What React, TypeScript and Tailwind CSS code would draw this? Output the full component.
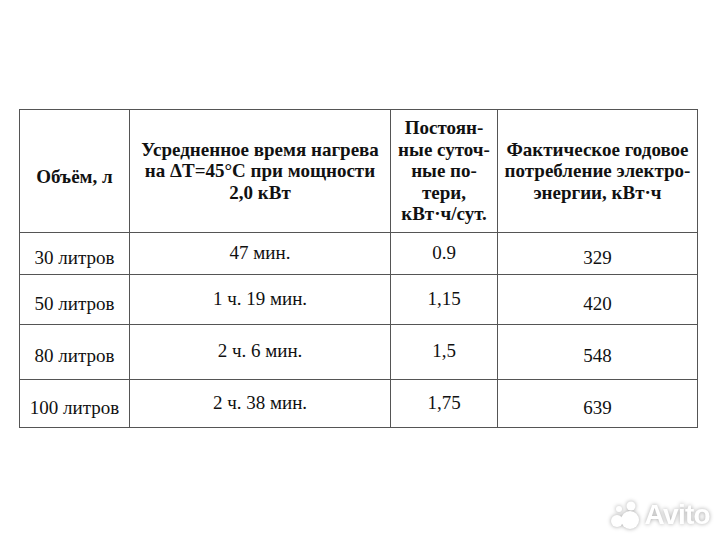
import React from 'react';

const rows = [
  { vol: '30 литров', time: '47 мин.', loss: '0.9', year: '329' },
  { vol: '50 литров', time: '1 ч. 19 мин.', loss: '1,15', year: '420' },
  { vol: '80 литров', time: '2 ч. 6 мин.', loss: '1,5', year: '548' },
  { vol: '100 литров', time: '2 ч. 38 мин.', loss: '1,75', year: '639' },
];

const cell =
  'flex items-center justify-center text-center border-r-[1.5px] border-b-[1.5px] border-[#555] font-[Liberation_Serif]';
const head = `${cell} text-[19px] font-bold leading-[21.5px]`;
const data = `${cell} text-[19px] leading-[22px]`;

function AvitoLogo() {
  return (
    <div className="flex items-center gap-[2px] drop-shadow-[0_0_2px_rgba(0,0,0,0.35)]">
      <svg width="34" height="30" viewBox="0 0 34 30">
        <circle cx="21" cy="20" r="9" fill="#fff" />
        <circle cx="8" cy="21" r="6" fill="#fff" />
        <circle cx="22" cy="6" r="4.5" fill="#fff" />
        <circle cx="10" cy="9" r="3" fill="#fff" />
      </svg>
      <span className="text-[28px] font-bold tracking-tight text-white leading-none font-[Liberation_Sans]">
        Avito
      </span>
    </div>
  );
}

export default function App() {
  return (
    <div className="relative w-[720px] h-[540px] bg-white text-[#111] font-[Liberation_Serif]">
      <div className="pt-[109px] pl-[19px]">
        <div className="grid w-fit grid-cols-[110px_261px_107px_200px] grid-rows-[123px_42px_50px_55px_48px] border-l-[1.5px] border-t-[1.5px] border-[#555]">
          <div className={`${head} pt-[12px]`}>Объём, л</div>
          <div className={head}>
            <span>Усредненное время нагрева<br />на ΔT=45°C при мощности<br />2,0 кВт</span>
          </div>
          <div className={head}>
            <span>Постоян-<br />ные суточ-<br />ные по-<br />тери,<br />кВт·ч/сут.</span>
          </div>
          <div className={head}>
            <span>Фактическое годовое<br />потребление электро-<br />энергии, кВт·ч</span>
          </div>
          {rows.map((r) => (
            <React.Fragment key={r.vol}>
              <div className={`${data} pt-[8px]`}>{r.vol}</div>
              <div className={`${data} pb-[2px]`}>{r.time}</div>
              <div className={`${data} pb-[2px]`}>{r.loss}</div>
              <div className={`${data} pt-[8px]`}>{r.year}</div>
            </React.Fragment>
          ))}
        </div>
      </div>
      <div className="absolute right-[10px] bottom-[10px]">
        <AvitoLogo />
      </div>
    </div>
  );
}
